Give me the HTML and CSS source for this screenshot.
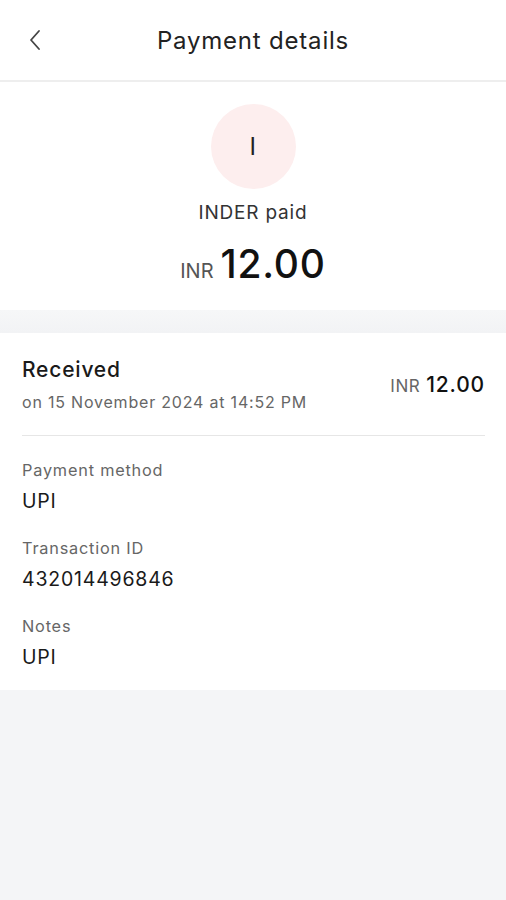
FILE: index.html
```html
<html>
<head>
	<link rel="stylesheet" href="styles.css">
</head>
<body>
	<div class="header">
		<div class="back">
			<svg width="16" height="22" viewBox="0 0 16 22"><path d="M11 2 L3 11 L11 20" fill="none" stroke="#444" stroke-width="1.8" stroke-linecap="round" stroke-linejoin="round"/></svg>
		</div>
		<div class="title">Payment details</div>
	</div>
	<div class="summary">
		<div class="avatar">I</div>
		<div class="payer">INDER paid</div>
		<div class="amount"><span class="cur">INR</span>12.00</div>
	</div>
	<div class="band"></div>
	<div class="card">
		<div class="row">
			<div>
				<div class="status">Received</div>
				<div class="date">on 15 November 2024 at 14:52 PM</div>
			</div>
			<div class="row-amount"><span class="cur-small">INR</span>12.00</div>
		</div>
		<div class="field">
			<div class="label">Payment method</div>
			<div class="value">UPI</div>
		</div>
		<div class="field">
			<div class="label">Transaction ID</div>
			<div class="value">432014496846</div>
		</div>
		<div class="field">
			<div class="label">Notes</div>
			<div class="value">UPI</div>
		</div>
	</div>
</body>
</html>
```

FILE: styles.css
```css
body {
	margin: 0;
	background: #f4f5f7;
	font-family: Inter, "Noto Sans", sans-serif;
	letter-spacing: 0.05em;
	color: #1a1a1a;
}
.header {
	position: relative;
	height: 80px;
	background: #fff;
	border-bottom: 2px solid #eeeeee;
	display: flex;
	align-items: center;
	justify-content: center;
}
.back {
	position: absolute;
	left: 28px;
	top: 29px;
}
.title {
	font-size: 24px;
	color: #222;
}
.summary {
	background: #fff;
	display: flex;
	flex-direction: column;
	align-items: center;
	padding: 22px 0 15px;
}
.avatar {
	width: 85px;
	height: 85px;
	border-radius: 50%;
	background: #fdeeee;
	display: flex;
	align-items: center;
	justify-content: center;
	font-size: 24px;
	color: #222;
}
.payer {
	margin-top: 12px;
	font-size: 19px;
	line-height: 24px;
	color: #333;
}
.amount {
	margin-top: 15px;
	font-size: 39px;
	line-height: 48px;
	font-weight: 500;
	letter-spacing: 0.02em;
	color: #111;
}
.cur {
	font-size: 20px;
	font-weight: 400;
	letter-spacing: 0;
	color: #555;
	margin-right: 7px;
}
.band {
	height: 23px;
	background: linear-gradient(#f6f7f8, #f2f3f5);
}
.card {
	background: #fff;
	padding: 0 21px 20px 22px;
}
.row {
	display: flex;
	justify-content: space-between;
	align-items: center;
	padding: 23px 0 22px;
	border-bottom: 1.5px solid #e6e6e6;
}
.status {
	font-size: 21px;
	line-height: 28px;
	font-weight: 500;
	color: #1a1a1a;
}
.date {
	margin-top: 7px;
	font-size: 16px;
	line-height: 22px;
	color: #666;
}
.row-amount {
	font-size: 21px;
	font-weight: 500;
	letter-spacing: 0.04em;
	color: #111;
}
.cur-small {
	font-size: 17px;
	font-weight: 400;
	letter-spacing: 0.03em;
	color: #666;
	margin-right: 6px;
}
.field {
	padding-top: 23px;
}
.label {
	font-size: 16.3px;
	line-height: 22px;
	color: #666;
}
.value {
	margin-top: 7px;
	font-size: 19.5px;
	line-height: 26px;
	color: #1a1a1a;
}
```
